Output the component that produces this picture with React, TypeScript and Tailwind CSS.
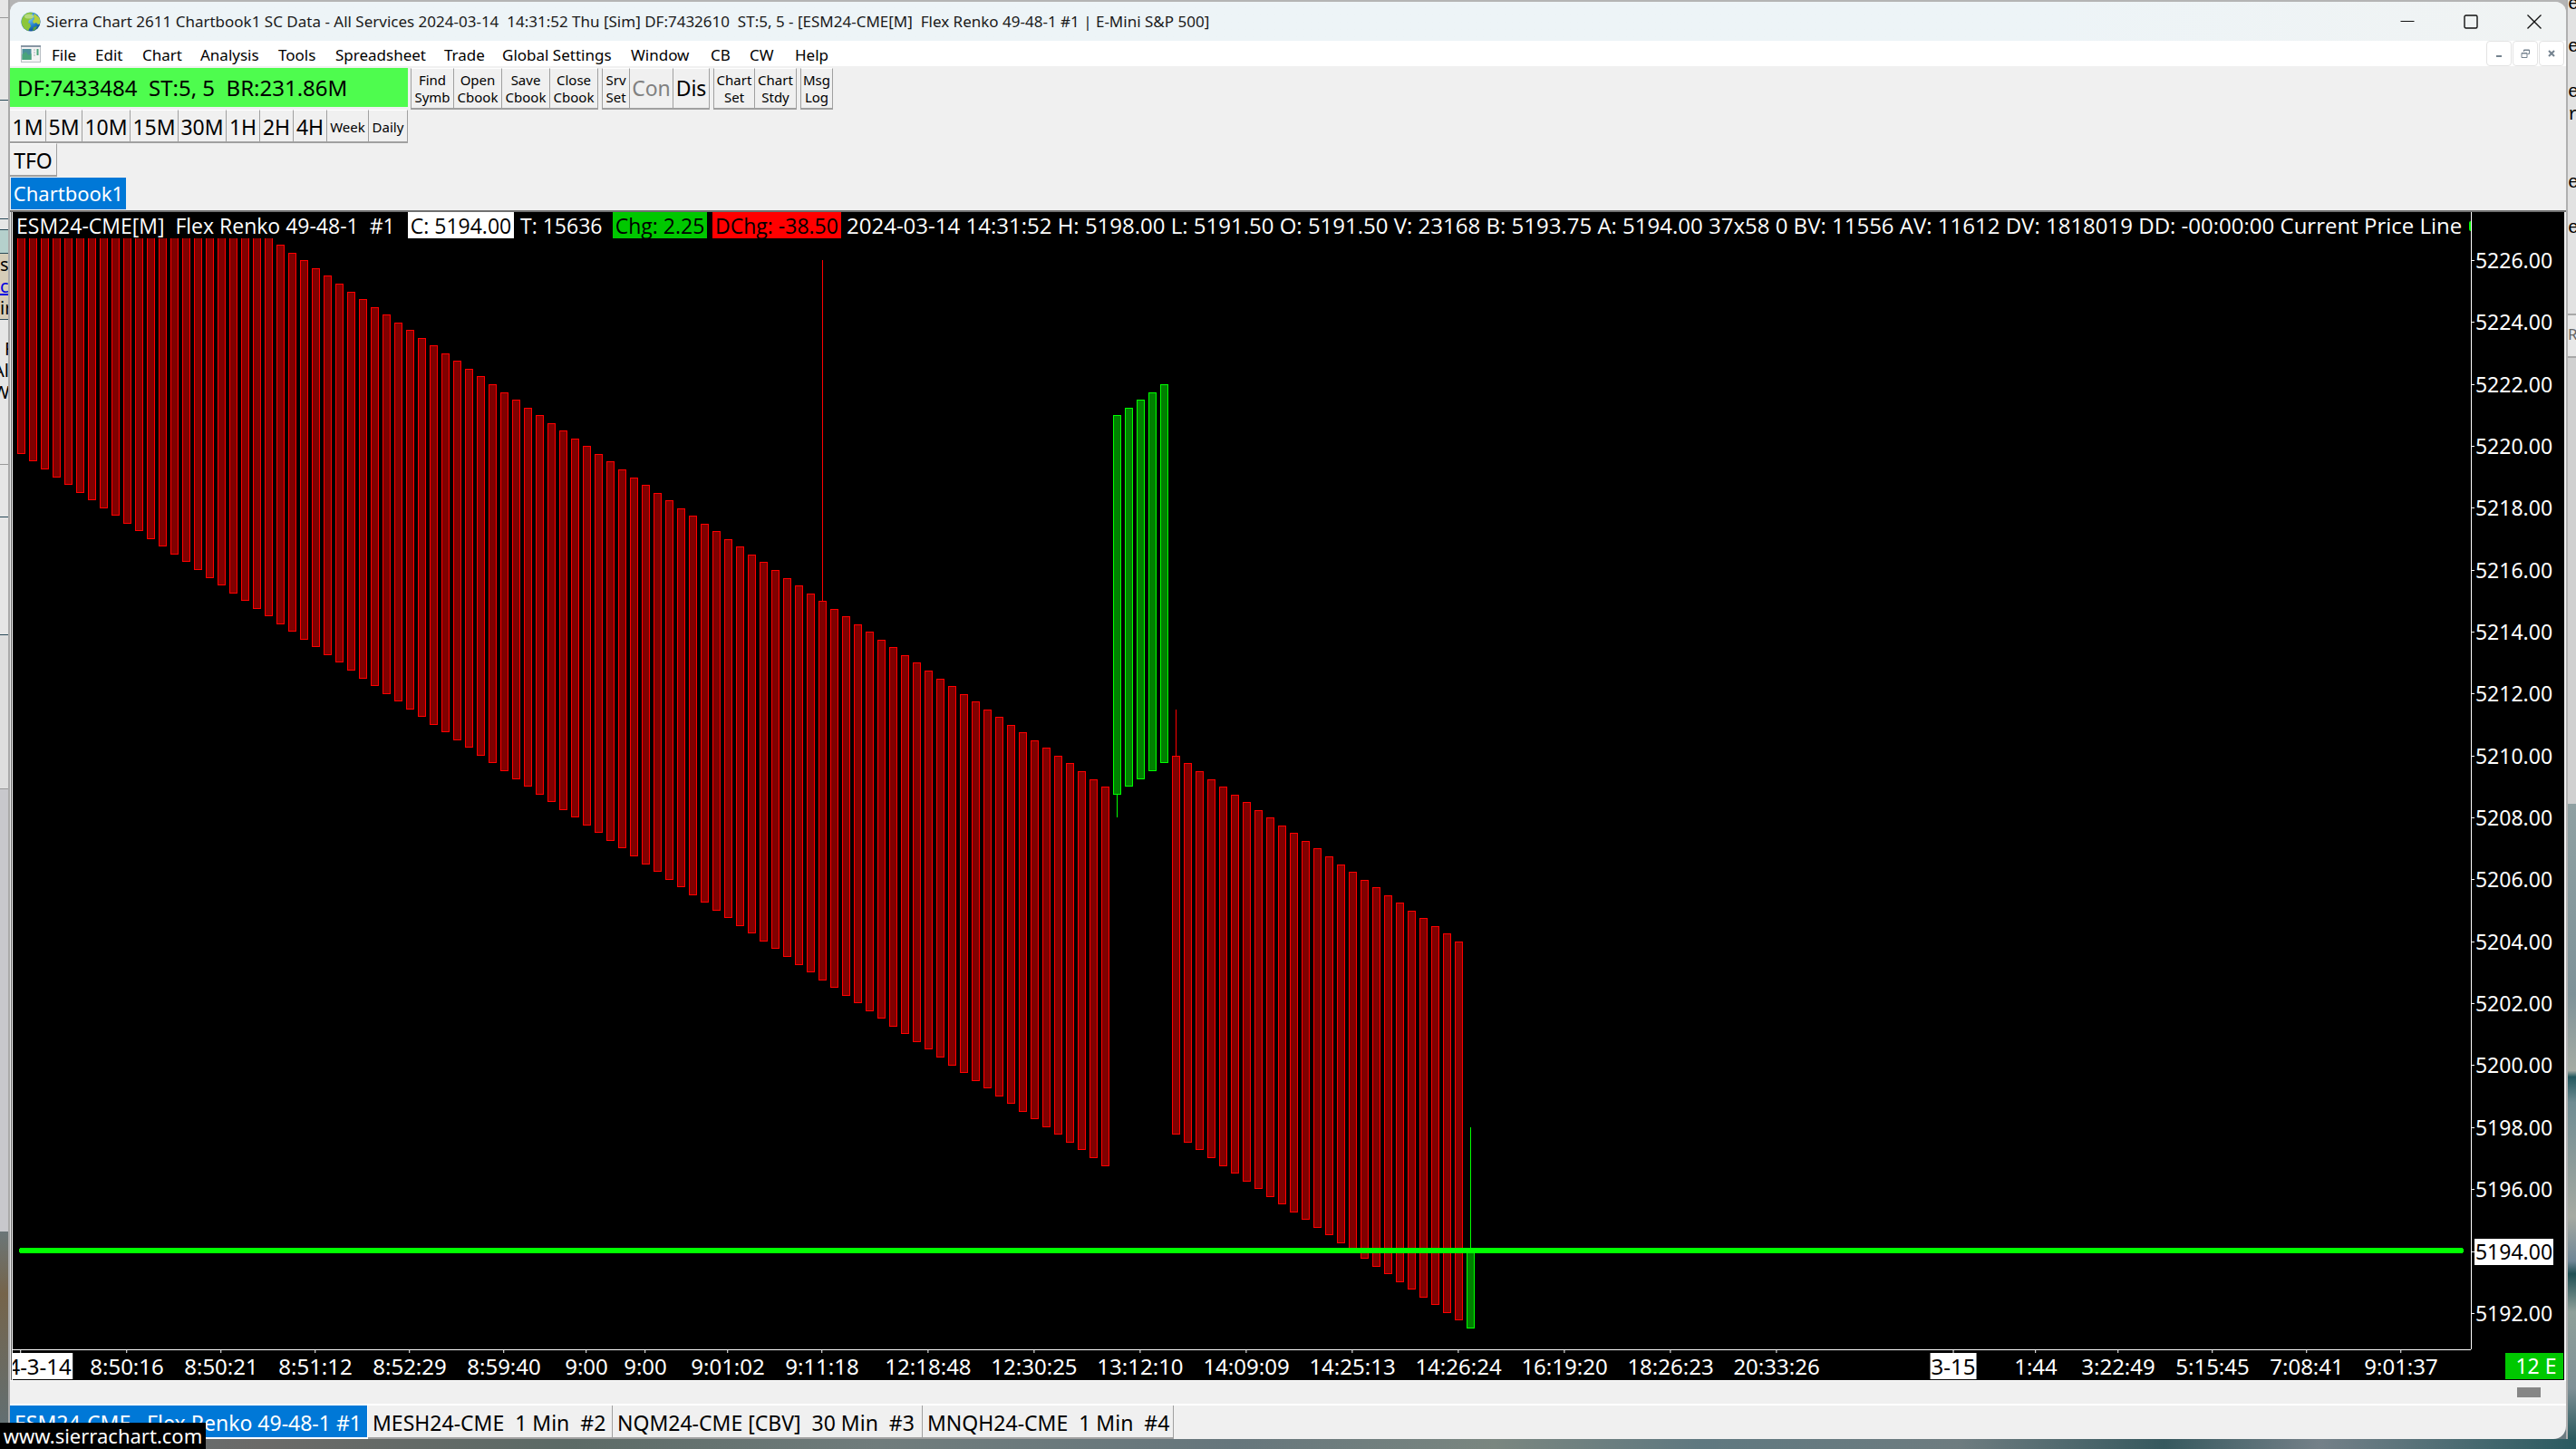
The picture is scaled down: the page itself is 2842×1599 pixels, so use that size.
import type { ReactNode } from "react";

type Bar = { slot: number; high: number; low: number; up?: boolean; wickHigh?: number; wickLow?: number };

const PLOT_WIDTH = 2712;
const PLOT_HEIGHT = 1226;
const SLOT = 13;
const FIRST_CENTER = 9;

const slotX = (slot: number) => FIRST_CENTER + slot * SLOT;
const priceY = (price: number) => Math.round(1117.5 + (5194 - price) * 34.16);

const bars: Bar[] = [
  ...Array.from({ length: 93 }, (_, i): Bar => ({
    slot: i,
    high: 5232 - i * 0.25,
    low: 5219.75 - i * 0.25,
    wickHigh: i === 68 ? 5226 : undefined,
  })),
  ...Array.from({ length: 5 }, (_, i): Bar => ({
    slot: 93 + i,
    high: 5221 + i * 0.25,
    low: 5208.75 + i * 0.25,
    up: true,
    wickLow: i === 0 ? 5208 : undefined,
  })),
  ...Array.from({ length: 25 }, (_, i): Bar => ({
    slot: 98 + i,
    high: 5210 - i * 0.25,
    low: 5197.75 - i * 0.25,
    wickHigh: i === 0 ? 5211.5 : undefined,
  })),
  { slot: 123, high: 5194, low: 5191.5, up: true, wickHigh: 5198 },
];

const prices = Array.from({ length: 18 }, (_, i) => 5226 - i * 2);

const times: { slot: number; label: string; day?: boolean }[] = [
  { slot: 0, label: "2024-3-14", day: true },
  { slot: 9, label: "8:50:16" },
  { slot: 17, label: "8:50:21" },
  { slot: 25, label: "8:51:12" },
  { slot: 33, label: "8:52:29" },
  { slot: 41, label: "8:59:40" },
  { slot: 48, label: "9:00" },
  { slot: 53, label: "9:00" },
  { slot: 60, label: "9:01:02" },
  { slot: 68, label: "9:11:18" },
  { slot: 77, label: "12:18:48" },
  { slot: 86, label: "12:30:25" },
  { slot: 95, label: "13:12:10" },
  { slot: 104, label: "14:09:09" },
  { slot: 113, label: "14:25:13" },
  { slot: 122, label: "14:26:24" },
  { slot: 131, label: "16:19:20" },
  { slot: 140, label: "18:26:23" },
  { slot: 149, label: "20:33:26" },
  { slot: 164, label: "3-15", day: true },
  { slot: 171, label: "1:44" },
  { slot: 178, label: "3:22:49" },
  { slot: 186, label: "5:15:45" },
  { slot: 194, label: "7:08:41" },
  { slot: 202, label: "9:01:37" },
];

const menus = [
  { label: "File", width: "w-[48px]" },
  { label: "Edit", width: "w-[52px]" },
  { label: "Chart", width: "w-[64px]" },
  { label: "Analysis", width: "w-[86px]" },
  { label: "Tools", width: "w-[63px]" },
  { label: "Spreadsheet", width: "w-[120px]" },
  { label: "Trade", width: "w-[64px]" },
  { label: "Global Settings", width: "w-[142px]" },
  { label: "Window", width: "w-[88px]" },
  { label: "CB", width: "w-[43px]" },
  { label: "CW", width: "w-[50px]" },
  { label: "Help", width: "w-[60px]" },
];

const periods = [
  { label: "1M", width: "w-[40px]" },
  { label: "5M", width: "w-[40px]" },
  { label: "10M", width: "w-[53px]" },
  { label: "15M", width: "w-[53px]" },
  { label: "30M", width: "w-[53px]" },
  { label: "1H", width: "w-[37px]" },
  { label: "2H", width: "w-[37px]" },
  { label: "4H", width: "w-[37px]" },
];

const tabs = [
  { label: "ESM24-CME   Flex Renko 49-48-1 #1", width: "w-[395px]", active: true },
  { label: "MESH24-CME  1 Min  #2", width: "w-[270px]" },
  { label: "NQM24-CME [CBV]  30 Min  #3", width: "w-[342px]" },
  { label: "MNQH24-CME  1 Min  #4", width: "w-[277px]" },
];

function Tool({ width, className = "", children }: { width: string; className?: string; children: ReactNode }) {
  return (
    <button
      type="button"
      className={`flex h-full shrink-0 flex-col items-center justify-center whitespace-nowrap border-b-2 border-r border-t border-b-[#a0a0a0] border-r-[#a0a0a0] border-t-white bg-[#f0f0f0] ${width} ${className}`}
    >
      {children}
    </button>
  );
}

function TwoLine({ width, top, bottom }: { width: string; top: string; bottom: string }) {
  return (
    <Tool width={width} className="text-[15px] leading-[19px]">
      <span>{top}</span>
      <span>{bottom}</span>
    </Tool>
  );
}

function GlobeIcon() {
  return (
    <svg viewBox="0 0 22 22" className="size-[22px]" aria-hidden="true">
      <defs>
        <radialGradient id="globe" cx="0.4" cy="0.3" r="0.75">
          <stop offset="0" stopColor="#8fd0f5" />
          <stop offset="0.55" stopColor="#2a86cf" />
          <stop offset="1" stopColor="#0c4a90" />
        </radialGradient>
        <clipPath id="globe-edge"><circle cx="11" cy="11" r="10.4" /></clipPath>
      </defs>
      <circle cx="11" cy="11" r="10.6" fill="url(#globe)" />
      <g clipPath="url(#globe-edge)">
        <path d="M0 11C0 4 4 1 9 0l4 1-1 3 2 1-2 3-3 1-1 3 2 1 1 3-2 3-1 3-4-2C2 16 0 14 0 11Z" fill="#8cc63a" />
        <path d="M15 2l6 5 1 6-3 1-2-2-3 1-1-3 2-2-1-3Z" fill="#b5cf3c" />
        <path d="M14 17l4-1-2 4-3 1Z" fill="#5da336" />
        <ellipse cx="9" cy="5" rx="5" ry="2.6" fill="#ffffff" opacity="0.35" />
      </g>
    </svg>
  );
}

function ChartWindowIcon() {
  return (
    <svg viewBox="0 0 22 19" className="h-[19px] w-[22px]" aria-hidden="true">
      <rect x="0.5" y="0.5" width="21" height="18" fill="#f3f3f3" stroke="#b8bec4" />
      <rect x="0" y="0" width="22" height="2" fill="#8795a3" />
      <rect x="1.5" y="4" width="10" height="12" fill="#4b8f9a" />
      <path d="M1.5 16V10l4-3 3 4 3-2v7Z" fill="#4aa37b" />
      <path d="M14 5h2M14 8h2M14 11h2" stroke="#c3c9ce" strokeWidth="1.4" />
      <path d="M18.5 4v7" stroke="#4aa37b" strokeWidth="2" />
    </svg>
  );
}

function TitleBar() {
  return (
    <header className="flex h-[43px] shrink-0 items-center bg-linear-to-r from-[#edf4f7] from-80% to-[#f0f3f3] pl-3">
      <GlobeIcon />
      <h1 className="ml-1.5 flex-1 whitespace-pre text-[17px] leading-[22px] text-[#1a1a1a]">
        {"Sierra Chart 2611 Chartbook1 SC Data - All Services 2024-03-14  14:31:52 Thu [Sim] DF:7432610  ST:5, 5 - [ESM24-CME[M]  Flex Renko 49-48-1 #1 | E-Mini S&P 500]"}
      </h1>
      <button type="button" aria-label="Minimize" className="flex h-full w-[70px] items-center justify-center">
        <svg viewBox="0 0 16 16" className="size-4"><path d="M0.5 7.5h15" stroke="#111" /></svg>
      </button>
      <button type="button" aria-label="Maximize" className="flex h-full w-[70px] items-center justify-center">
        <svg viewBox="0 0 16 16" className="size-4"><rect x="1" y="1" width="14" height="14" rx="1.5" fill="none" stroke="#111" strokeWidth="1.4" /></svg>
      </button>
      <button type="button" aria-label="Close" className="flex h-full w-[70px] items-center justify-center">
        <svg viewBox="0 0 16 16" className="size-4"><path d="M0.5 0.5l15 15M15.5 0.5l-15 15" stroke="#111" strokeWidth="1.3" /></svg>
      </button>
    </header>
  );
}

function MdiButton({ label, children }: { label: string; children: ReactNode }) {
  return (
    <button type="button" aria-label={label} className="flex h-7 w-7 items-center justify-center rounded-sm border border-[#e3e3e3] bg-white">
      <svg viewBox="0 0 10 10" className="size-2.5" fill="none" stroke="#74828f">{children}</svg>
    </button>
  );
}

function MenuBar() {
  return (
    <nav className="flex h-7 shrink-0 items-center bg-white pl-3 pr-0.5">
      <ChartWindowIcon />
      <div className="ml-3 flex flex-1 pt-1">
        {menus.map((menu) => (
          <button key={menu.label} type="button" className={`shrink-0 whitespace-nowrap text-left text-[17px] leading-6 ${menu.width}`}>
            {menu.label}
          </button>
        ))}
      </div>
      <div className="flex gap-px">
        <MdiButton label="Minimize chart"><path d="M2 8h6" strokeWidth="2" /></MdiButton>
        <MdiButton label="Restore chart">
          <path d="M3.5 3V1h6v4.500h-2M1 4.500h6v5h-6ZM3.500 1.500h6M1 5h6" />
        </MdiButton>
        <MdiButton label="Close chart"><path d="M2 2l6 6M8 2l-6 6" strokeWidth="2" /></MdiButton>
      </div>
    </nav>
  );
}

function Toolbars() {
  return (
    <div className="shrink-0 border-b-2 border-[#707070] bg-[#f0f0f0]">
      <div className="flex h-[48px] pt-[2px]">
        <div className="mr-[3px] h-[43px] w-[439px] whitespace-pre bg-[#4efc4e] pl-2 text-[24px] leading-[43px]">
          {"DF:7433484  ST:5, 5  BR:231.86M"}
        </div>
        <TwoLine width="w-[48px] border-l border-l-[#a0a0a0]" top="Find" bottom="Symb" />
        <TwoLine width="w-[53px]" top="Open" bottom="Cbook" />
        <TwoLine width="w-[53px]" top="Save" bottom="Cbook" />
        <TwoLine width="w-[53px]" top="Close" bottom="Cbook" />
        <div className="w-[4px]" />
        <TwoLine width="w-[31px] border-l border-l-[#a0a0a0]" top="Srv" bottom="Set" />
        <Tool width="w-[48px]" className="text-[23px] text-[#808080]">Con</Tool>
        <Tool width="w-[40px]" className="text-[23px]">Dis</Tool>
        <div className="w-[4px]" />
        <TwoLine width="w-[46px] border-l border-l-[#a0a0a0]" top="Chart" bottom="Set" />
        <TwoLine width="w-[46px]" top="Chart" bottom="Stdy" />
        <div className="w-[4px]" />
        <TwoLine width="w-[36px] border-l border-l-[#a0a0a0]" top="Msg" bottom="Log" />
      </div>
      <div className="flex h-[37px]">
        {periods.map((period) => (
          <Tool key={period.label} width={period.width} className="pt-0.5 text-[23px]">{period.label}</Tool>
        ))}
        <Tool width="w-[46px]" className="pt-0.5 text-[15px]">Week</Tool>
        <Tool width="w-[43px]" className="pt-0.5 text-[15px]">Daily</Tool>
      </div>
      <div className="flex h-[37px]">
        <Tool width="w-[52px]" className="pt-0.5 text-[23px]">TFO</Tool>
      </div>
      <div className="flex h-[37px] pb-px pl-px pt-px">
        <button type="button" className="h-full w-[127px] bg-[#0078d7] text-[22px] leading-[35px] text-white">Chartbook1</button>
      </div>
    </div>
  );
}

function DataLine() {
  return (
    <div className="relative flex h-[29px] shrink-0 overflow-hidden whitespace-pre pl-1 font-['Open_Sans',sans-serif] text-[23px] leading-[30px] text-white">
      <span className="w-[432px] shrink-0">{"ESM24-CME[M]  Flex Renko 49-48-1  #1"}</span>
      <span className="w-[117px] shrink-0 bg-white text-center text-black">C: 5194.00</span>
      <span className="w-[109px] shrink-0 pl-[7px]">T: 15636</span>
      <span className="w-[104px] shrink-0 bg-[#00c800] text-center text-black">Chg: 2.25</span>
      <span className="mx-[6px] w-[142px] shrink-0 bg-[#ff0000] text-center text-black">DChg: -38.50</span>
      <span className="shrink-0 text-[24px]">
        2024-03-14 14:31:52 H: 5198.00 L: 5191.50 O: 5191.50 V: 23168 B: 5193.75 A: 5194.00 37x58 0 BV: 11556 AV: 11612 DV: 1818019 DD: -00:00:00 Current Price Line
      </span>
      <span className="absolute right-0 top-[10px] h-[11px] w-[2px] rounded-l-full bg-[#00ff00]" />
    </div>
  );
}

function Plot() {
  return (
    <svg
      viewBox={`0 0 ${PLOT_WIDTH} ${PLOT_HEIGHT}`}
      preserveAspectRatio="none"
      shapeRendering="crispEdges"
      className="block min-h-0 w-full flex-1"
      role="img"
      aria-label="Flex Renko price chart"
    >
      {bars.map((bar) => {
        const x = slotX(bar.slot);
        const top = Math.max(priceY(bar.high), -4);
        const bottom = priceY(bar.low);
        const line = bar.up ? "#00ff00" : "#ff0000";
        return (
          <g key={bar.slot}>
            {bar.wickHigh !== undefined && <rect x={x} y={priceY(bar.wickHigh)} width={1} height={top - priceY(bar.wickHigh)} fill={line} />}
            {bar.wickLow !== undefined && <rect x={x} y={bottom} width={1} height={priceY(bar.wickLow) - bottom} fill={line} />}
            <rect x={x - 4} y={top} width={9} height={bottom - top} fill={line} />
            <rect x={x - 3} y={top + 1} width={7} height={bottom - top - 2} fill={bar.up ? "#008000" : "#800000"} />
          </g>
        );
      })}
      <rect x={7} y={1114} width={2697} height={6} rx={3} fill="#00ff00" />
    </svg>
  );
}

function TimeAxis() {
  return (
    <div className="relative h-[34px] shrink-0 overflow-hidden border-t border-white text-[24px] leading-[29px] text-white">
      {times.map((time) => (
        <div
          key={time.slot}
          className="absolute top-0 flex -translate-x-1/2 flex-col items-center whitespace-nowrap"
          style={{ left: `${(slotX(time.slot) / PLOT_WIDTH) * 100}%` }}
        >
          <span className="h-[3px] w-px bg-white" />
          <span className={time.day ? "bg-white px-px text-black" : ""}>{time.label}</span>
        </div>
      ))}
    </div>
  );
}

function PriceAxis() {
  return (
    <div className="flex w-[103px] shrink-0 flex-col text-[23px] leading-[29px] text-white">
      <div className="flex min-h-0 flex-1 flex-col justify-between border-l border-white pb-[25px] pt-[39px]">
        {prices.map((price) => (
          <div key={price} className="flex items-center">
            <span className="h-px w-[3px] bg-white" />
            <span className={price === 5194 ? "w-[87px] bg-white text-center text-black" : "w-[87px] text-center"}>
              {price.toFixed(2)}
            </span>
          </div>
        ))}
      </div>
      <div className="flex h-[34px] justify-end pr-px pt-1">
        <span className="h-[29px] w-[64px] bg-[#00c800] pl-1 text-center">12 E</span>
      </div>
    </div>
  );
}

function ChartPanel() {
  return (
    <main className="ml-px mr-0.5 flex min-h-0 flex-1 border-l border-[#606060]">
      <div className="flex min-w-0 flex-1 border-l border-white bg-black">
        <div className="flex min-w-0 flex-1 flex-col">
          <DataLine />
          <Plot />
          <TimeAxis />
        </div>
        <PriceAxis />
      </div>
    </main>
  );
}

function Footer() {
  return (
    <footer className="shrink-0">
      <div className="flex h-[28px] justify-end border-b-2 border-t border-white bg-[#f0f0f0] pr-7 pt-[7px]">
        <div className="h-[11px] w-[26px] bg-[#868686]" />
      </div>
      <div className="flex h-[37px] text-[23px]">
        {tabs.map((tab) => (
          <button
            key={tab.label}
            type="button"
            className={`shrink-0 whitespace-pre border-b-2 border-r pl-[5px] pt-0.5 text-left leading-[35px] ${tab.width} ${
              tab.active ? "border-white bg-[#0078d7] text-white" : "border-[#a0a0a0] bg-[#f0f0f0]"
            }`}
          >
            {tab.label}
          </button>
        ))}
      </div>
    </footer>
  );
}

function LeftBackdrop() {
  return (
    <div className="flex w-[11px] shrink-0 flex-col overflow-hidden border-r-2 border-[#a9a9a9] bg-[#e6e6e6] text-[20px] leading-6 text-black" aria-hidden="true">
      <div className="h-[20px] shrink-0 border-b border-[#999999]" />
      <div className="h-[91px] shrink-0 border-b border-[#2a4a58]" />
      <div className="h-[131px] shrink-0 border-b border-[#2a4a58]" />
      <div className="h-[12px] shrink-0 border-b border-[#2a4a58]" />
      <div className="h-[26px] shrink-0 border-b border-[#2a4a58] bg-[#b5d0cc]" />
      <div className="h-[73px] shrink-0 border-b border-[#2a4a58] bg-[#d6cdb8]">
        <p>s</p>
        <p className="text-[#0000e0] underline">c</p>
        <p>ir</p>
      </div>
      <div className="h-[160px] shrink-0 border-b border-[#999999] pt-5">
        <p className="pl-[5px]">F</p>
        <p className="-ml-2">Al</p>
        <p className="-ml-2">W</p>
      </div>
      <div className="h-[58px] shrink-0 border-b border-[#2a4a58]" />
      <div className="h-[130px] shrink-0 border-b border-[#2a4a58]" />
      <div className="h-[170px] shrink-0 border-b border-[#999999] bg-[#dedede]" />
      <div className="h-[488px] shrink-0 bg-[#c8c8cc]" />
      <div className="flex-1 bg-linear-to-b from-[#6b7678] via-[#75644a] via-30% to-[#5f7076]" />
    </div>
  );
}

function RightBackdrop() {
  return (
    <div className="flex w-[11px] shrink-0 flex-col overflow-hidden border-l-2 border-[#b0b0b0] bg-[#e2e2e2] font-['Liberation_Mono',monospace] text-[20px] leading-[25px] text-black" aria-hidden="true">
      <p className="-mt-2 h-[47px] shrink-0">e</p>
      <p className="h-[50px] shrink-0">e</p>
      <p className="h-[25px] shrink-0">e</p>
      <p className="h-[75px] shrink-0">r</p>
      <p className="h-[50px] shrink-0">e</p>
      <p className="h-[107px] shrink-0">e</p>
      <p className="h-[49px] shrink-0 border-y-2 border-[#a8a8a8] bg-[#e8e8e8] pt-2 font-['Noto_Sans',sans-serif] text-[17px] text-[#666666]">RL</p>
      <div className="h-[492px] shrink-0 bg-[#d0d0d0]" />
      <div className="flex-1 bg-[linear-gradient(#8fa0a2,#7e9298_30%,#a5aca4_42%,#23585e_43%,#6f8c92_47%,#a6aaa2_65%,#6f8796_72%,#1f5054_74%,#8fa09a_80%,#7f9096_92%,#2a5a5e)]" />
    </div>
  );
}

export default function App() {
  return (
    <div className="relative flex h-screen w-full flex-col overflow-hidden bg-[#66767c] font-['Noto_Sans',sans-serif] text-black">
      <div className="flex min-h-0 flex-1">
        <LeftBackdrop />
        <div className="flex min-w-0 flex-1 flex-col bg-[linear-gradient(#b4b4b4_50%,#6a7a80_50%)]">
          <div className="mt-0.5 flex min-h-0 flex-1 flex-col overflow-hidden rounded-t-[12px] rounded-br-[14px] bg-[#f0f0f0]">
            <TitleBar />
            <MenuBar />
            <Toolbars />
            <ChartPanel />
            <Footer />
          </div>
        </div>
        <RightBackdrop />
      </div>
      <div className="h-[11px] shrink-0 bg-[linear-gradient(90deg,#5f7076,#6b6a68_10%,#5c6a66_22%,#707c7c_34%,#66767c_48%,#7a8680_58%,#5f7880_66%,#6e7c80_76%,#36585e_84%,#748088_90%,#2a5a60)]" />
      <a href="#" className="absolute bottom-0 left-0 h-[29px] w-[227px] whitespace-nowrap bg-black text-center text-[22px] leading-[29px] text-white">
        www.sierrachart.com
      </a>
    </div>
  );
}
